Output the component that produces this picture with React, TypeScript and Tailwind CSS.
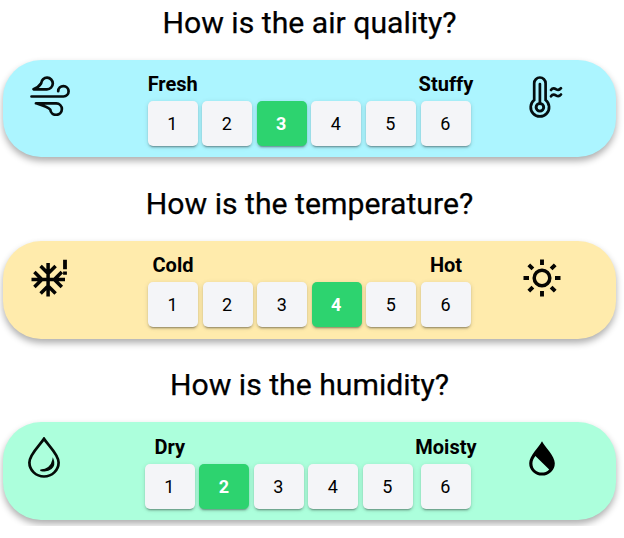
import type { ReactNode } from "react";

function WindIcon() {
  return (
    <svg width="40" height="40" viewBox="0 0 40 40" fill="none" stroke="#050c0d" strokeWidth="2.7" strokeLinecap="round" strokeLinejoin="round">
      <path d="M1.5 20.5H33.5A5.2 5.2 0 1 0 28.2 15.2" />
      <path d="M3.5 13.3H17A5.8 5.8 0 1 0 11.2 7.2C9.5 10 7.5 11.5 3.5 13.3Z" />
      <path d="M6 27.3H26.3A5.8 5.8 0 1 1 20.3 33.6C17.5 30.8 12 29.3 6 27.3Z" />
    </svg>
  );
}

function ThermometerIcon() {
  return (
    <svg width="34" height="42" viewBox="0 0 34 42" fill="none" stroke="#040e10" strokeWidth="2.7" strokeLinecap="round">
      <path d="M5.2 24V7.2a5.7 5.7 0 0 1 11.4 0V24a9.2 9.2 0 1 1-11.4 0Z" />
      <path d="M10.9 8V27" strokeWidth="2.7" />
      <circle cx="10.9" cy="31.3" r="3.8" strokeWidth="2.9" />
      <path d="M22 14c2-3 3.8-1.6 5.2-.7 1.7 1 3.2.9 4.8-1.1M22 20.3c2-3 3.8-1.6 5.2-.7 1.7 1 3.2.9 4.8-1.1" />
    </svg>
  );
}

function SnowIcon() {
  return (
    <svg width="38" height="40" viewBox="0 0 38 40" fill="none" stroke="#040402" strokeWidth="3.5">
      <path d="M.5 20.6H34M17.1 4V37.4M9.6 7 17.1 14.5 24.6 7M9.6 34.4 17.1 26.9 24.6 34.4M3.4 13.1 10.9 20.6 3.4 28.1M30.8 28.1 23.3 20.6 30.8 13.1" />
      <path d="M34 .7V10.2M34 12.4V15.8" strokeWidth="3.8" />
    </svg>
  );
}

function SunIcon() {
  return (
    <svg width="38" height="38" viewBox="0 0 38 38" fill="none" stroke="#060502" strokeWidth="3.9">
      <circle cx="19" cy="19" r="7.8" strokeWidth="3.5" />
      <path d="M19 .5V6M19 32V37.5M.5 19H6M32 19h5.5M5.8 5.8 9.9 9.9M28.1 28.1 32.2 32.2M32.2 5.8 28.1 9.9M9.9 28.1 5.8 32.2" />
    </svg>
  );
}

function DropIcon() {
  return (
    <svg width="32" height="41" viewBox="0 0 32 41" fill="none" stroke="#040c08" strokeWidth="2.7">
      <path d="M16 1.8C12 8.2 1.4 17 1.4 25.5a14.6 14 0 0 0 29.2 0C30.6 17 20 8.2 16 1.8Z" />
      <path d="M25 22.8c2.7 7.2-3.6 12.7-12.6 10.4 7-.6 11.4-4.3 12.6-10.4Z" fill="#040c08" strokeWidth="1.4" />
    </svg>
  );
}

function HalfDropIcon() {
  return (
    <svg width="26" height="35" viewBox="0 0 26 35" fill="#000">
      <path fillRule="evenodd" d="M13 .2C10.3 5.8.2 14.8.2 22.2a12.8 12.4 0 0 0 25.6 0C25.8 14.8 15.7 5.8 13 .2ZM6.4 14.9 20.2 28.4C14.7 34.3 3.4 31.8 3.4 22.4c0-2.9 1.3-5 3-7.5Z" />
    </svg>
  );
}

type QuestionProps = {
  title: string;
  titleClass: string;
  panel: string;
  low: string;
  high: string;
  selected: number;
  left: ReactNode;
  right: ReactNode;
  leftClass: string;
  rightClass: string;
  scaleClass: string;
  lastClass?: string;
};

function Question(p: QuestionProps) {
  return (
    <section>
      <h2 className={`w-[619px] text-center text-[30.2px] leading-[40px] font-normal [-webkit-text-stroke:0.25px_black] ${p.titleClass}`}>{p.title}</h2>
      <div className={`ml-[3px] flex w-[613px] items-start rounded-[38px] shadow-[0_4px_7px_rgba(0,0,0,0.32)] ${p.panel}`}>
        <div className={`shrink-0 ${p.leftClass}`}>{p.left}</div>
        <div className={`flex shrink-0 ${p.scaleClass}`}>
          {[1, 2, 3, 4, 5, 6].map((n) => (
            <div key={n} className={`flex w-[50px] flex-col items-center ${n === 6 ? p.lastClass ?? "" : ""}`}>
              <div className="h-[27px] text-[20px] font-bold leading-[20px] whitespace-nowrap">{n === 1 ? p.low : n === 6 ? p.high : ""}</div>
              <button
                className={`h-[45px] w-[50px] shrink-0 rounded-[5px] pr-[1px] text-[18px] shadow-[0_3px_1px_-2px_rgba(0,0,0,0.2),0_2px_2px_0_rgba(0,0,0,0.14),0_1px_5px_0_rgba(0,0,0,0.12)] ${n === p.selected ? "bg-[#2dd36f] font-bold text-white" : "bg-[#f4f5f8] text-black"}`}
              >
                {n}
              </button>
            </div>
          ))}
        </div>
        <div className={`shrink-0 ${p.rightClass}`}>{p.right}</div>
      </div>
    </section>
  );
}

export default function App() {
  return (
    <main className="h-[538px] w-[624px] overflow-hidden bg-white font-[Roboto,sans-serif] text-black">
      <div className="h-[526px] overflow-hidden">
        <Question title="How is the air quality?" titleClass="h-[60px] pt-[3px]" panel="h-[97px] bg-[#acf5ff]" low="Fresh" high="Stuffy" selected={3}
          left={<WindIcon />} right={<ThermometerIcon />} leftClass="w-[144.7px] pl-[27px] pt-[16px]" rightClass="pl-[58px] pt-[16px]" scaleClass="gap-[4.56px] pt-[14px]" lastClass="ml-[0.5px]" />
        <Question title="How is the temperature?" titleClass="h-[84px] pt-[27px]" panel="h-[98px] bg-[#ffebac]" low="Cold" high="Hot" selected={4}
          left={<SnowIcon />} right={<SunIcon />} leftClass="w-[145px] pl-[28px] pt-[18px]" rightClass="pl-[52px] pt-[18px]" scaleClass="gap-[4.6px] pt-[14px]" />
        <Question title="How is the humidity?" titleClass="h-[83px] pt-[26px]" panel="h-[98px] bg-[#acffdc]" low="Dry" high="Moisty" selected={2}
          left={<DropIcon />} right={<HalfDropIcon />} leftClass="w-[141.9px] pl-[25px] pt-[15px]" rightClass="pl-[58px] pt-[19px]" scaleClass="gap-[4.5px] pt-[15px]" lastClass="ml-[3.5px]" />
      </div>
    </main>
  );
}
